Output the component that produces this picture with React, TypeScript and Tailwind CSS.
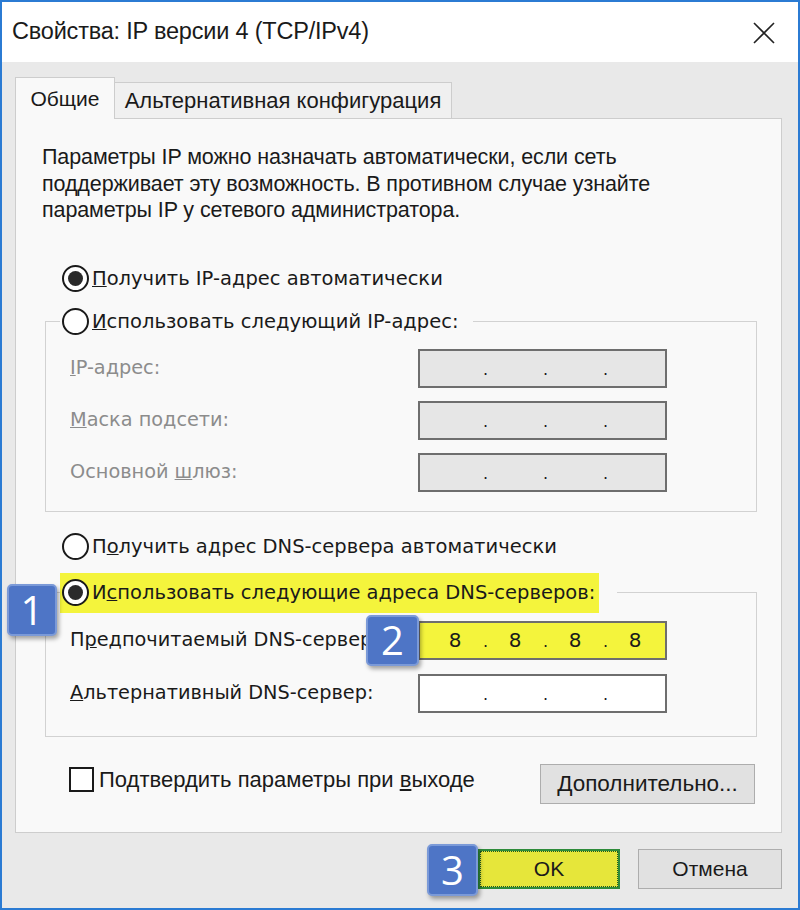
const seg = "Liberation Sans, Arial, sans-serif";

function Radio({ checked }: { checked?: boolean }) {
  return (
    <span className="flex h-[27px] w-[27px] shrink-0 items-center justify-center rounded-full border-[2px] border-[#1a1a1a] bg-white">
      {checked && <span className="h-[15px] w-[15px] rounded-full bg-[#2a2a2a]" />}
    </span>
  );
}

function Badge({ n, className }: { n: string; className: string }) {
  return (
    <span
      className={
        "absolute flex items-center justify-center rounded-[5px] border-2 border-[#7b9ad8] bg-[#4e75c6] text-[40px] leading-none text-white shadow-[2px_3px_4px_rgba(0,0,0,0.35)] " +
        className
      }
      style={{ fontFamily: "Open Sans, Liberation Sans, sans-serif" }}
    >
      {n}
    </span>
  );
}

function IpBox({ values, disabled, yellow }: { values?: string[]; disabled?: boolean; yellow?: boolean }) {
  const v = values ?? ["", "", "", ""];
  const bg = yellow ? "bg-[#f4f43c]" : disabled ? "bg-[#e6e6e6]" : "bg-white";
  return (
    <div
      className={`flex h-[39px] w-[249px] items-center border-[2px] border-[#6e6e6e] pl-[7px] text-[20px] text-[#1a1a1a] ${bg}`}
      style={{ fontFamily: "DejaVu Sans, sans-serif" }}
    >
      {v.map((x, i) => (
        <div key={i} className="flex items-center">
          <span className="w-[56px] text-center">{x}</span>
          {i < 3 && <span className="w-[4px] pt-[4px] text-center text-[16px]">.</span>}
        </div>
      ))}
    </div>
  );
}

function Row({ label, children, gray }: { label: React.ReactNode; children: React.ReactNode; gray?: boolean }) {
  return (
    <div className="flex items-center">
      <span className={`w-[348px] text-[19.3px] ${gray ? "text-[#8c8c8c]" : "text-[#1a1a1a]"}`}>{label}</span>
      {children}
    </div>
  );
}

export default function App() {
  return (
    <div className="flex h-[910px] w-[800px] flex-col border-2 border-[#2b7bd3] bg-[#e9e9e9] text-[#1a1a1a]" style={{ fontFamily: seg }}>
      {/* title bar */}
      <div className="flex h-[60px] shrink-0 items-center justify-between bg-white pl-[10px] pr-[22px]">
        <span className="text-[23.5px] tracking-[-0.2px]">Свойства: IP версии 4 (TCP/IPv4)</span>
        <svg width="24" height="24" viewBox="0 0 24 24" className="mt-[2px]">
          <path d="M2 2 L22 22 M22 2 L2 22" stroke="#222" strokeWidth="1.6" />
        </svg>
      </div>

      <div className="flex flex-col pl-[13px] pr-[16px] pt-[15px]">
        {/* tabs */}
        <div className="relative z-10 -mb-px flex h-[42px] items-end">
          <div className="flex h-[42px] w-[100px] items-center justify-center border border-b-0 border-[#cdcdcd] bg-[#f9f9f9] text-[21px]">
            Общие
          </div>
          <div className="flex h-[37px] w-[337px] items-center justify-center border border-b-[#cdcdcd] border-l-0 border-[#cdcdcd] bg-[#f0f0f0] text-[22px]">
            Альтернативная конфигурация
          </div>
        </div>

        {/* panel */}
        <div className="flex h-[715px] flex-col border border-[#cdcdcd] bg-[#f9f9f9] pl-[26px] pr-[24px] pt-[25px]">
          <p className="text-[21.5px] leading-[26.5px] tracking-[-0.1px]">
            Параметры IP можно назначать автоматически, если сеть
            <br />
            поддерживает эту возможность. В противном случае узнайте
            <br />
            параметры IP у сетевого администратора.
          </p>

          <div style={{ fontFamily: "DejaVu Sans, sans-serif" }}>
            <label className="ml-[20px] mt-[40px] flex h-[30px] items-center gap-[3px] text-[19.5px]">
              <Radio checked />
              <span>
                <u>П</u>олучить IP-адрес автоматически
              </span>
            </label>

            <fieldset className="ml-[3px] mt-[13px] w-[712px] border border-[#d2d2d2] pb-[19px] pl-[24px]">
              <legend className="-ml-[10px] flex h-[30px] items-center gap-[3px] pl-[2px] pr-[14px] text-[19.5px]">
                <Radio />
                <span>
                  <u>И</u>спользовать следующий IP-адрес:
                </span>
              </legend>
              <div className="mt-[12px] flex flex-col gap-[13px]">
                <Row gray label={<><u>I</u>P-адрес:</>}>
                  <IpBox disabled />
                </Row>
                <Row gray label={<><u>М</u>аска подсети:</>}>
                  <IpBox disabled />
                </Row>
                <Row gray label={<>Основной <u>ш</u>люз:</>}>
                  <IpBox disabled />
                </Row>
              </div>
            </fieldset>

            <label className="ml-[20px] mt-[20px] flex h-[30px] items-center gap-[3px] text-[19.5px]">
              <Radio />
              <span>
                П<u>о</u>лучить адрес DNS-сервера автоматически
              </span>
            </label>

            <fieldset className="relative ml-[3px] mt-[11px] w-[712px] border border-[#d2d2d2] pb-[23px] pl-[24px]">
              <legend className="-ml-[10px] pr-[18px]">
                <span className="flex h-[40px] items-center gap-[3px] bg-[#f4f43c] pl-[2px] pr-[4px] text-[19.5px]">
                  <Radio checked />
                  <span>
                    И<u>с</u>пользовать следующие адреса DNS-серверов:
                  </span>
                </span>
              </legend>
              <Badge n="1" className="left-[-39px] top-[-29px] h-[52px] w-[50px]" />
              <div className="mt-[8px] flex flex-col gap-[14px]">
                <Row label={<>П<u>р</u>едпочитаемый DNS-сервер</>}>
                  <div className="relative">
                    <Badge n="2" className="left-[-52px] top-[-6px] z-10 h-[51px] w-[53px]" />
                    <IpBox yellow values={["8", "8", "8", "8"]} />
                  </div>
                </Row>
                <Row label={<><u>А</u>льтернативный DNS-сервер:</>}>
                  <IpBox />
                </Row>
              </div>
            </fieldset>
          </div>

          <div className="mt-[26px] flex items-start justify-between pl-[27px] pr-[2px]">
            <label className="flex items-center gap-[5px] text-[22px]">
              <span className="h-[25px] w-[25px] border-[2px] border-[#1a1a1a] bg-white" />
              <span>
                Подтвердить параметры при <u>в</u>ыходе
              </span>
            </label>
            <button className="mt-[1px] h-[40px] w-[215px] border border-[#adadad] bg-[#e1e1e1] text-[22.5px]">
              <u>Д</u>ополнительно...
            </button>
          </div>
        </div>

        {/* footer */}
        <div className="mt-[16px] flex justify-end gap-[18px]">
          <div className="relative">
            <Badge n="3" className="left-[-51px] top-[-5px] h-[52px] w-[51px]" />
            <button className="flex h-[40px] w-[142px] items-center justify-center border-[2px] border-[#2e8b3a] bg-[#e6e63a] text-[21px]">
              <span className="flex h-full w-full items-center justify-center border border-dotted border-[#1d5a22]">OK</span>
            </button>
          </div>
          <button className="h-[40px] w-[144px] border border-[#adadad] bg-[#e1e1e1] text-[21px]">Отмена</button>
        </div>
      </div>
    </div>
  );
}
